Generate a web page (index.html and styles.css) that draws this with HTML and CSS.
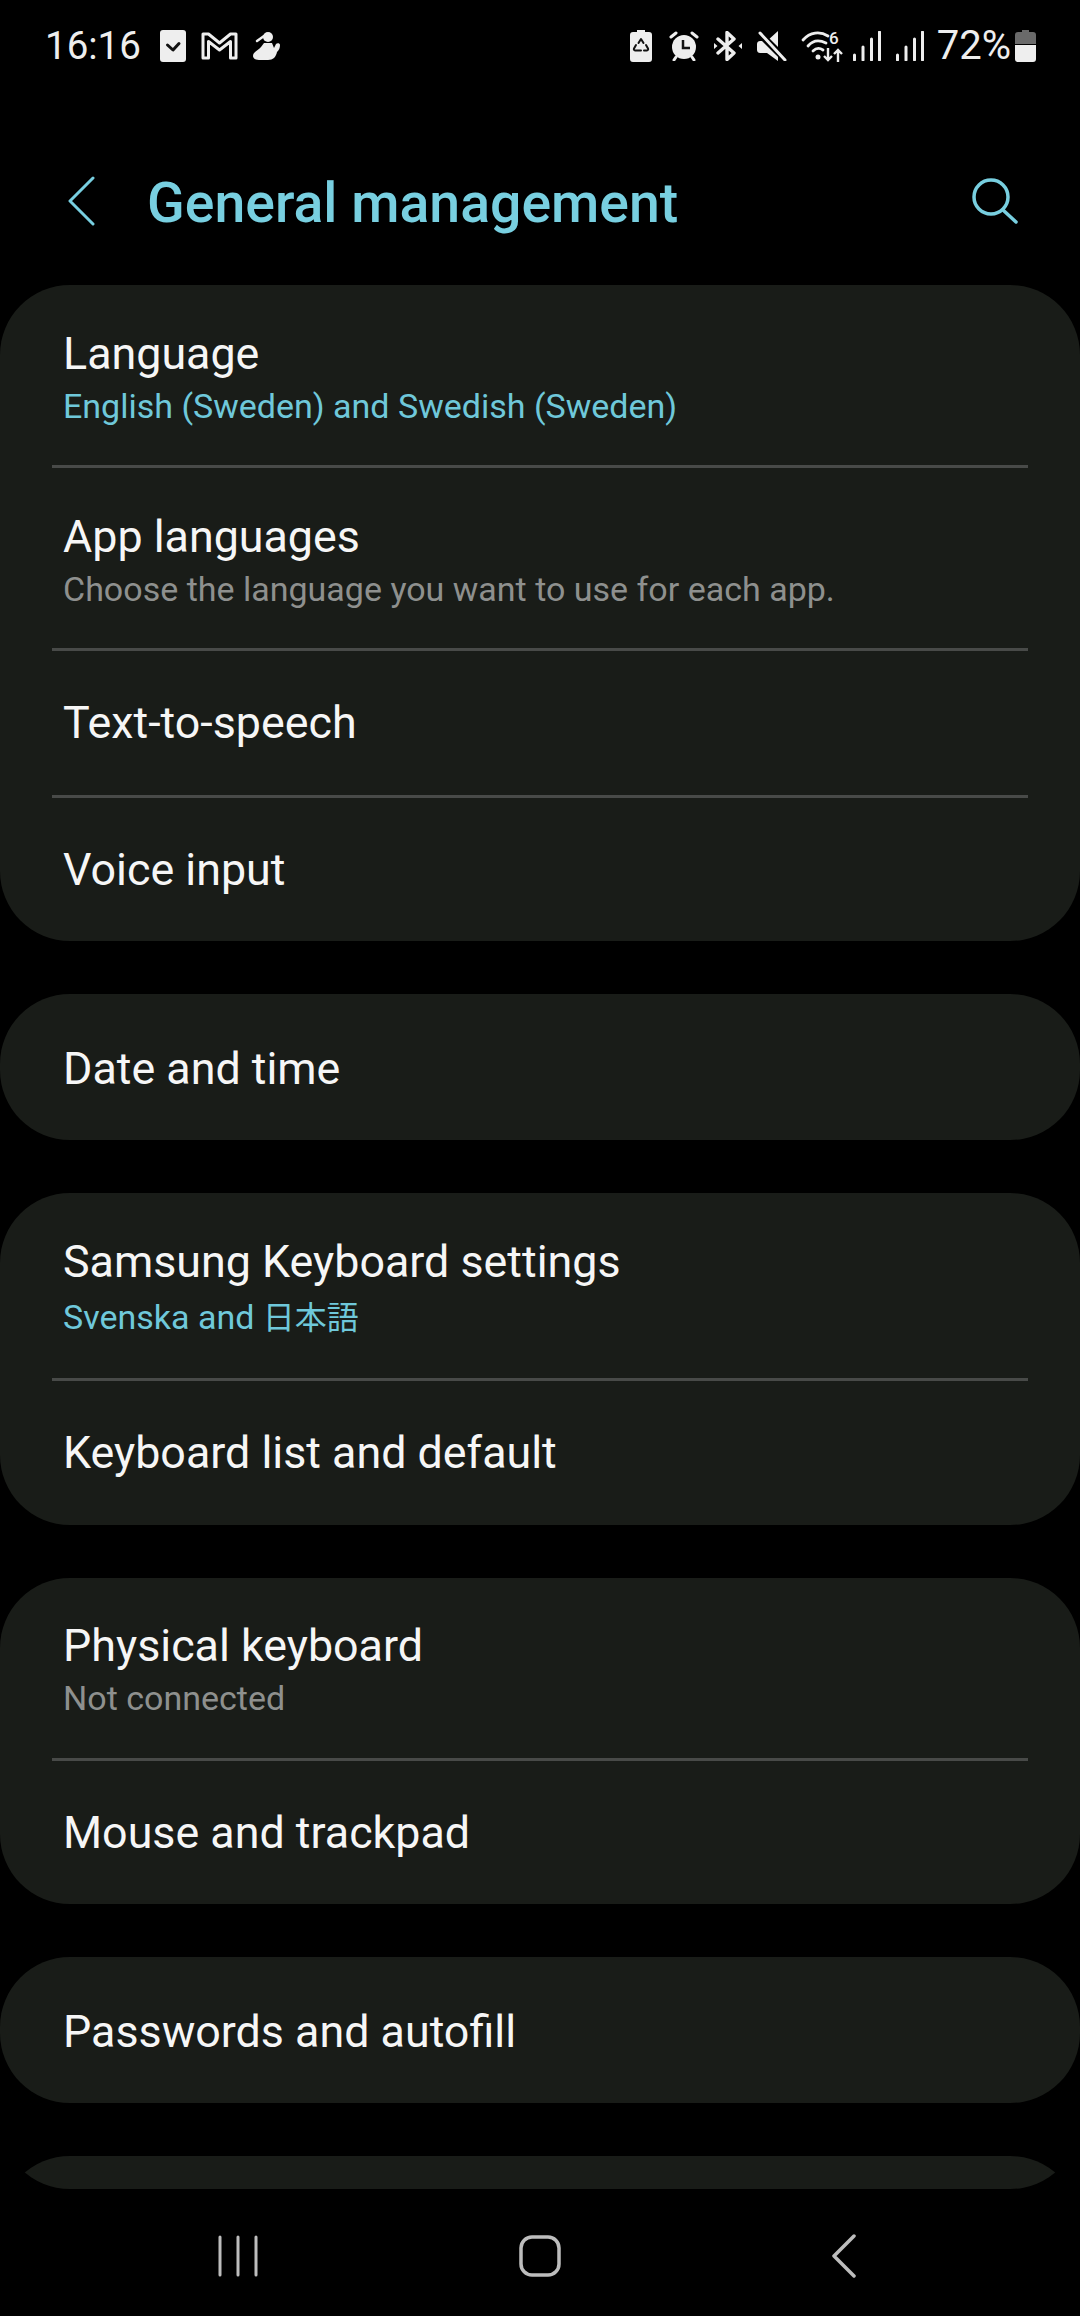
FILE: index.html
```html
<!DOCTYPE html>
<html lang="en">
  <head>
    <meta charset="UTF-8" />
    <meta name="viewport" content="width=device-width, initial-scale=1.0" />
    <title>General management</title>
    <link rel="stylesheet" href="styles.css">
  </head>
  <body>
    <div class="screen">
      <div class="status-bar">
        <div class="status-left">
          <span class="clock">16:16</span>
          <svg class="icon-check" width="26" height="32" viewBox="0 0 26 32"><rect width="26" height="32" rx="3" fill="#eee"/><path d="M7.500 15l5.500 5 6-6.500" fill="none" stroke="#111" stroke-width="3" stroke-linecap="round" stroke-linejoin="round"/></svg>
          <svg class="icon-mail" width="37" height="28" viewBox="0 0 37 28"><path d="M2 2h5.500l11 9 11-9H35v24h-5.500V9.500L18.500 18 7.500 9.500V26H2z" fill="none" stroke="#eee" stroke-width="3" stroke-linejoin="round"/></svg>
          <svg class="icon-figure" width="28" height="30" viewBox="0 0 28 30"><circle cx="15" cy="6" r="5" fill="#eee"/><path d="M11 5L4 10" stroke="#eee" stroke-width="2.500" stroke-linecap="round"/><path d="M11 12h8l2 5 2-4c1-1 4-1 4 1 0 3-1 5-3 7-1 5-4 8-9 8H6c-4 0-6-2-6-4 0-4 6-6 8-9z" fill="#eee"/></svg>
        </div>
        <div class="status-right">
          <svg class="icon-saver" width="22" height="32" viewBox="0 0 22 32"><path d="M7 0h8v2h4c2 0 3 1 3 3v24c0 2-1 3-3 3H3c-2 0-3-1-3-3V5c0-2 1-3 3-3h4z" fill="#eee"/><path d="M8.500 13l2.500-4 2.500 4M16 15l2 3.500c.5 1-.2 2-1 2h-3M11 20.500H5c-.8 0-1.500-1-1-2l2-3.500" fill="none" stroke="#111" stroke-width="2" stroke-linecap="round" stroke-linejoin="round"/></svg>
          <svg class="icon-alarm" width="30" height="30" viewBox="0 0 30 30"><path d="M2 6l5-4M28 6l-5-4M7 26l-2 3M23 26l2 3" stroke="#eee" stroke-width="3" stroke-linecap="round"/><circle cx="15" cy="16" r="12" fill="#eee"/><path d="M14 9v8h7" fill="none" stroke="#111" stroke-width="2.500"/></svg>
          <svg class="icon-bt" width="28" height="30" viewBox="0 0 28 30"><path d="M4 8l16 14-7 6.500V1.500l7 6.500L4 22" fill="none" stroke="#eee" stroke-width="3.400" stroke-linejoin="round" stroke-linecap="round"/><path d="M0 12v6l3.500-3zM28 12v6l-3.500-3z" fill="#eee"/></svg>
          <svg class="icon-mute" width="30" height="30" viewBox="0 0 30 30"><path d="M21 0v30l-11-8H3c-1.500 0-3-1-3-3v-6c0-2 1.500-3 3-3h7z" fill="#eee"/><path d="M0 0l30 30" stroke="#000" stroke-width="7"/><path d="M3 2l25 27" stroke="#eee" stroke-width="3" stroke-linecap="round"/></svg>
          <svg class="icon-wifi" width="42" height="32" viewBox="0 0 42 32"><path d="M1 10c7-8 17-9 25-4M6 16c5-6 12-6 18-3M11 21c3-3 7-3 10-1" fill="none" stroke="#eee" stroke-width="2.800" stroke-linecap="round"/><circle cx="16" cy="27" r="2.500" fill="#eee"/><text x="27" y="14" class="wifi-6">6</text><path d="M26 18v12M22 26l4 4 4-4M36 32V20M32 24l4-4 4 4" fill="none" stroke="#eee" stroke-width="2.400"/></svg>
          <svg class="icon-signal" width="28" height="30" viewBox="0 0 28 30"><path d="M1.500 24v5M10 16v13M18.500 8v21M26.500 1v28" stroke="#eee" stroke-width="3" stroke-linecap="round"/></svg>
          <svg class="icon-signal" width="28" height="30" viewBox="0 0 28 30"><path d="M1.500 24v5M10 16v13M18.500 8v21M26.500 1v28" stroke="#eee" stroke-width="3" stroke-linecap="round"/></svg>
          <span class="percent">72%</span>
          <svg class="icon-battery" width="21" height="32" viewBox="0 0 21 32"><path d="M7 0h7v2h4c2 0 3 1 3 3v9H0V5c0-2 1-3 3-3h4z" fill="#6a6a6a"/><path d="M0 15h21v14c0 2-1 3-3 3H3c-2 0-3-1-3-3z" fill="#eee"/></svg>
        </div>
      </div>

      <div class="app-bar">
        <svg class="back" width="27" height="50" viewBox="0 0 27 50"><path d="M25 2L2 25l23 23" fill="none" stroke="#78cfe0" stroke-width="3" stroke-linecap="round" stroke-linejoin="round"/></svg>
        <h1>General management</h1>
        <svg class="search" width="46" height="46" viewBox="0 0 46 46"><circle cx="19" cy="19" r="17" fill="none" stroke="#78cfe0" stroke-width="3.500"/><path d="M31 32l13 12" stroke="#78cfe0" stroke-width="3.500" stroke-linecap="round"/></svg>
      </div>

      <div class="list">
        <div class="card">
          <div class="row row-two">
            <div class="row-title">Language</div>
            <div class="row-sub sub-blue">English (Sweden) and Swedish (Sweden)</div>
          </div>
          <div class="divider"></div>
          <div class="row row-two">
            <div class="row-title">App languages</div>
            <div class="row-sub">Choose the language you want to use for each app.</div>
          </div>
          <div class="divider"></div>
          <div class="row">
            <div class="row-title">Text-to-speech</div>
          </div>
          <div class="divider"></div>
          <div class="row">
            <div class="row-title">Voice input</div>
          </div>
        </div>

        <div class="card">
          <div class="row row-single">
            <div class="row-title">Date and time</div>
          </div>
        </div>

        <div class="card">
          <div class="row row-two row-tall">
            <div class="row-title">Samsung Keyboard settings</div>
            <div class="row-sub sub-blue">Svenska and <span class="cjk">日本語</span></div>
          </div>
          <div class="divider"></div>
          <div class="row">
            <div class="row-title">Keyboard list and default</div>
          </div>
        </div>

        <div class="card">
          <div class="row row-two">
            <div class="row-title">Physical keyboard</div>
            <div class="row-sub">Not connected</div>
          </div>
          <div class="divider"></div>
          <div class="row">
            <div class="row-title">Mouse and trackpad</div>
          </div>
        </div>

        <div class="card">
          <div class="row row-single">
            <div class="row-title">Passwords and autofill</div>
          </div>
        </div>

        <div class="card">
          <div class="row row-single"></div>
        </div>
      </div>

      <div class="nav-bar">
        <svg width="40" height="42" viewBox="0 0 40 42"><path d="M2 2v38M20 2v38M38 2v38" stroke="#bdbdbd" stroke-width="3" stroke-linecap="round"/></svg>
        <svg class="nav-home" width="42" height="42" viewBox="0 0 42 42"><rect x="2" y="2" width="38" height="38" rx="11" fill="none" stroke="#bdbdbd" stroke-width="3.500"/></svg>
        <svg width="24" height="44" viewBox="0 0 24 44"><path d="M22 2L2 22l20 20" fill="none" stroke="#bdbdbd" stroke-width="3.500" stroke-linecap="round" stroke-linejoin="round"/></svg>
      </div>
    </div>
  </body>
</html>
```

FILE: styles.css
```css
* {
  box-sizing: border-box;
}
html,
body {
  margin: 0;
  background-color: #000;
}
body {
  font-family: Roboto, "Noto Sans CJK JP", sans-serif;
  color: #f2f2f2;
}
.screen {
  display: flex;
  flex-direction: column;
  width: 1080px;
  height: 2316px;
  overflow: hidden;
}

/* status bar */
.status-bar {
  display: flex;
  justify-content: space-between;
  align-items: center;
  height: 92px;
  padding: 0 44px 0 45px;
  flex: none;
}
.status-left,
.status-right {
  display: flex;
  align-items: center;
}
.clock,
.percent {
  font-size: 38.500px;
  color: #eee;
  line-height: 1;
}
.percent {
  font-size: 40px;
  margin: 0 -11px 0 -2px;
}
.status-left {
  gap: 15px;
}
.clock {
  margin-right: 4px;
}
.status-right {
  gap: 15px;
}
.icon-saver {
  margin-right: 2px;
}
.icon-wifi {
  margin-right: -6px;
  overflow: visible;
}
.wifi-6 {
  font-size: 17px;
  font-weight: 500;
  fill: #eee;
}

/* title */
.app-bar {
  display: flex;
  align-items: center;
  height: 193px;
  padding: 24px 62px 0 68px;
  flex: none;
}
.app-bar h1 {
  flex: 1;
  margin: 6px 0 0 52px;
  font-size: 55.400px;
  font-weight: 500;
  color: #78cfe0;
}

/* cards */
.list {
  display: flex;
  flex-direction: column;
  gap: 53px;
  height: 1904px;
  flex: none;
  overflow: hidden;
  border-radius: 0 0 70px 70px;
}
.card {
  flex: none;
  background-color: #191c18;
  border-radius: 70px;
}
.row {
  display: flex;
  flex-direction: column;
  justify-content: center;
  height: 143.500px;
  padding: 1px 63px 0;
}
.row-single {
  height: 146px;
  padding-top: 3px;
}
.row-two {
  height: 180px;
  padding-top: 7px;
}
.row-tall {
  height: 185px;
  padding-top: 10px;
}
.row-title {
  font-size: 44.800px;
  line-height: 54px;
  color: #f6f6f6;
}
.row-sub {
  font-size: 34px;
  line-height: 50px;
  color: #8e908e;
}
.row-tall .row-sub {
  line-height: 56px;
}
.cjk {
  font-size: 32px;
}
.sub-blue {
  color: #6fc8da;
}
.divider {
  height: 3px;
  margin: 0 52px;
  background-color: #484a48;
}

/* nav */
.nav-bar {
  display: flex;
  justify-content: space-between;
  align-items: center;
  flex: 1;
  padding: 6px 224px 0 218px;
}
.nav-home {
  margin-right: 10px;
}
```
